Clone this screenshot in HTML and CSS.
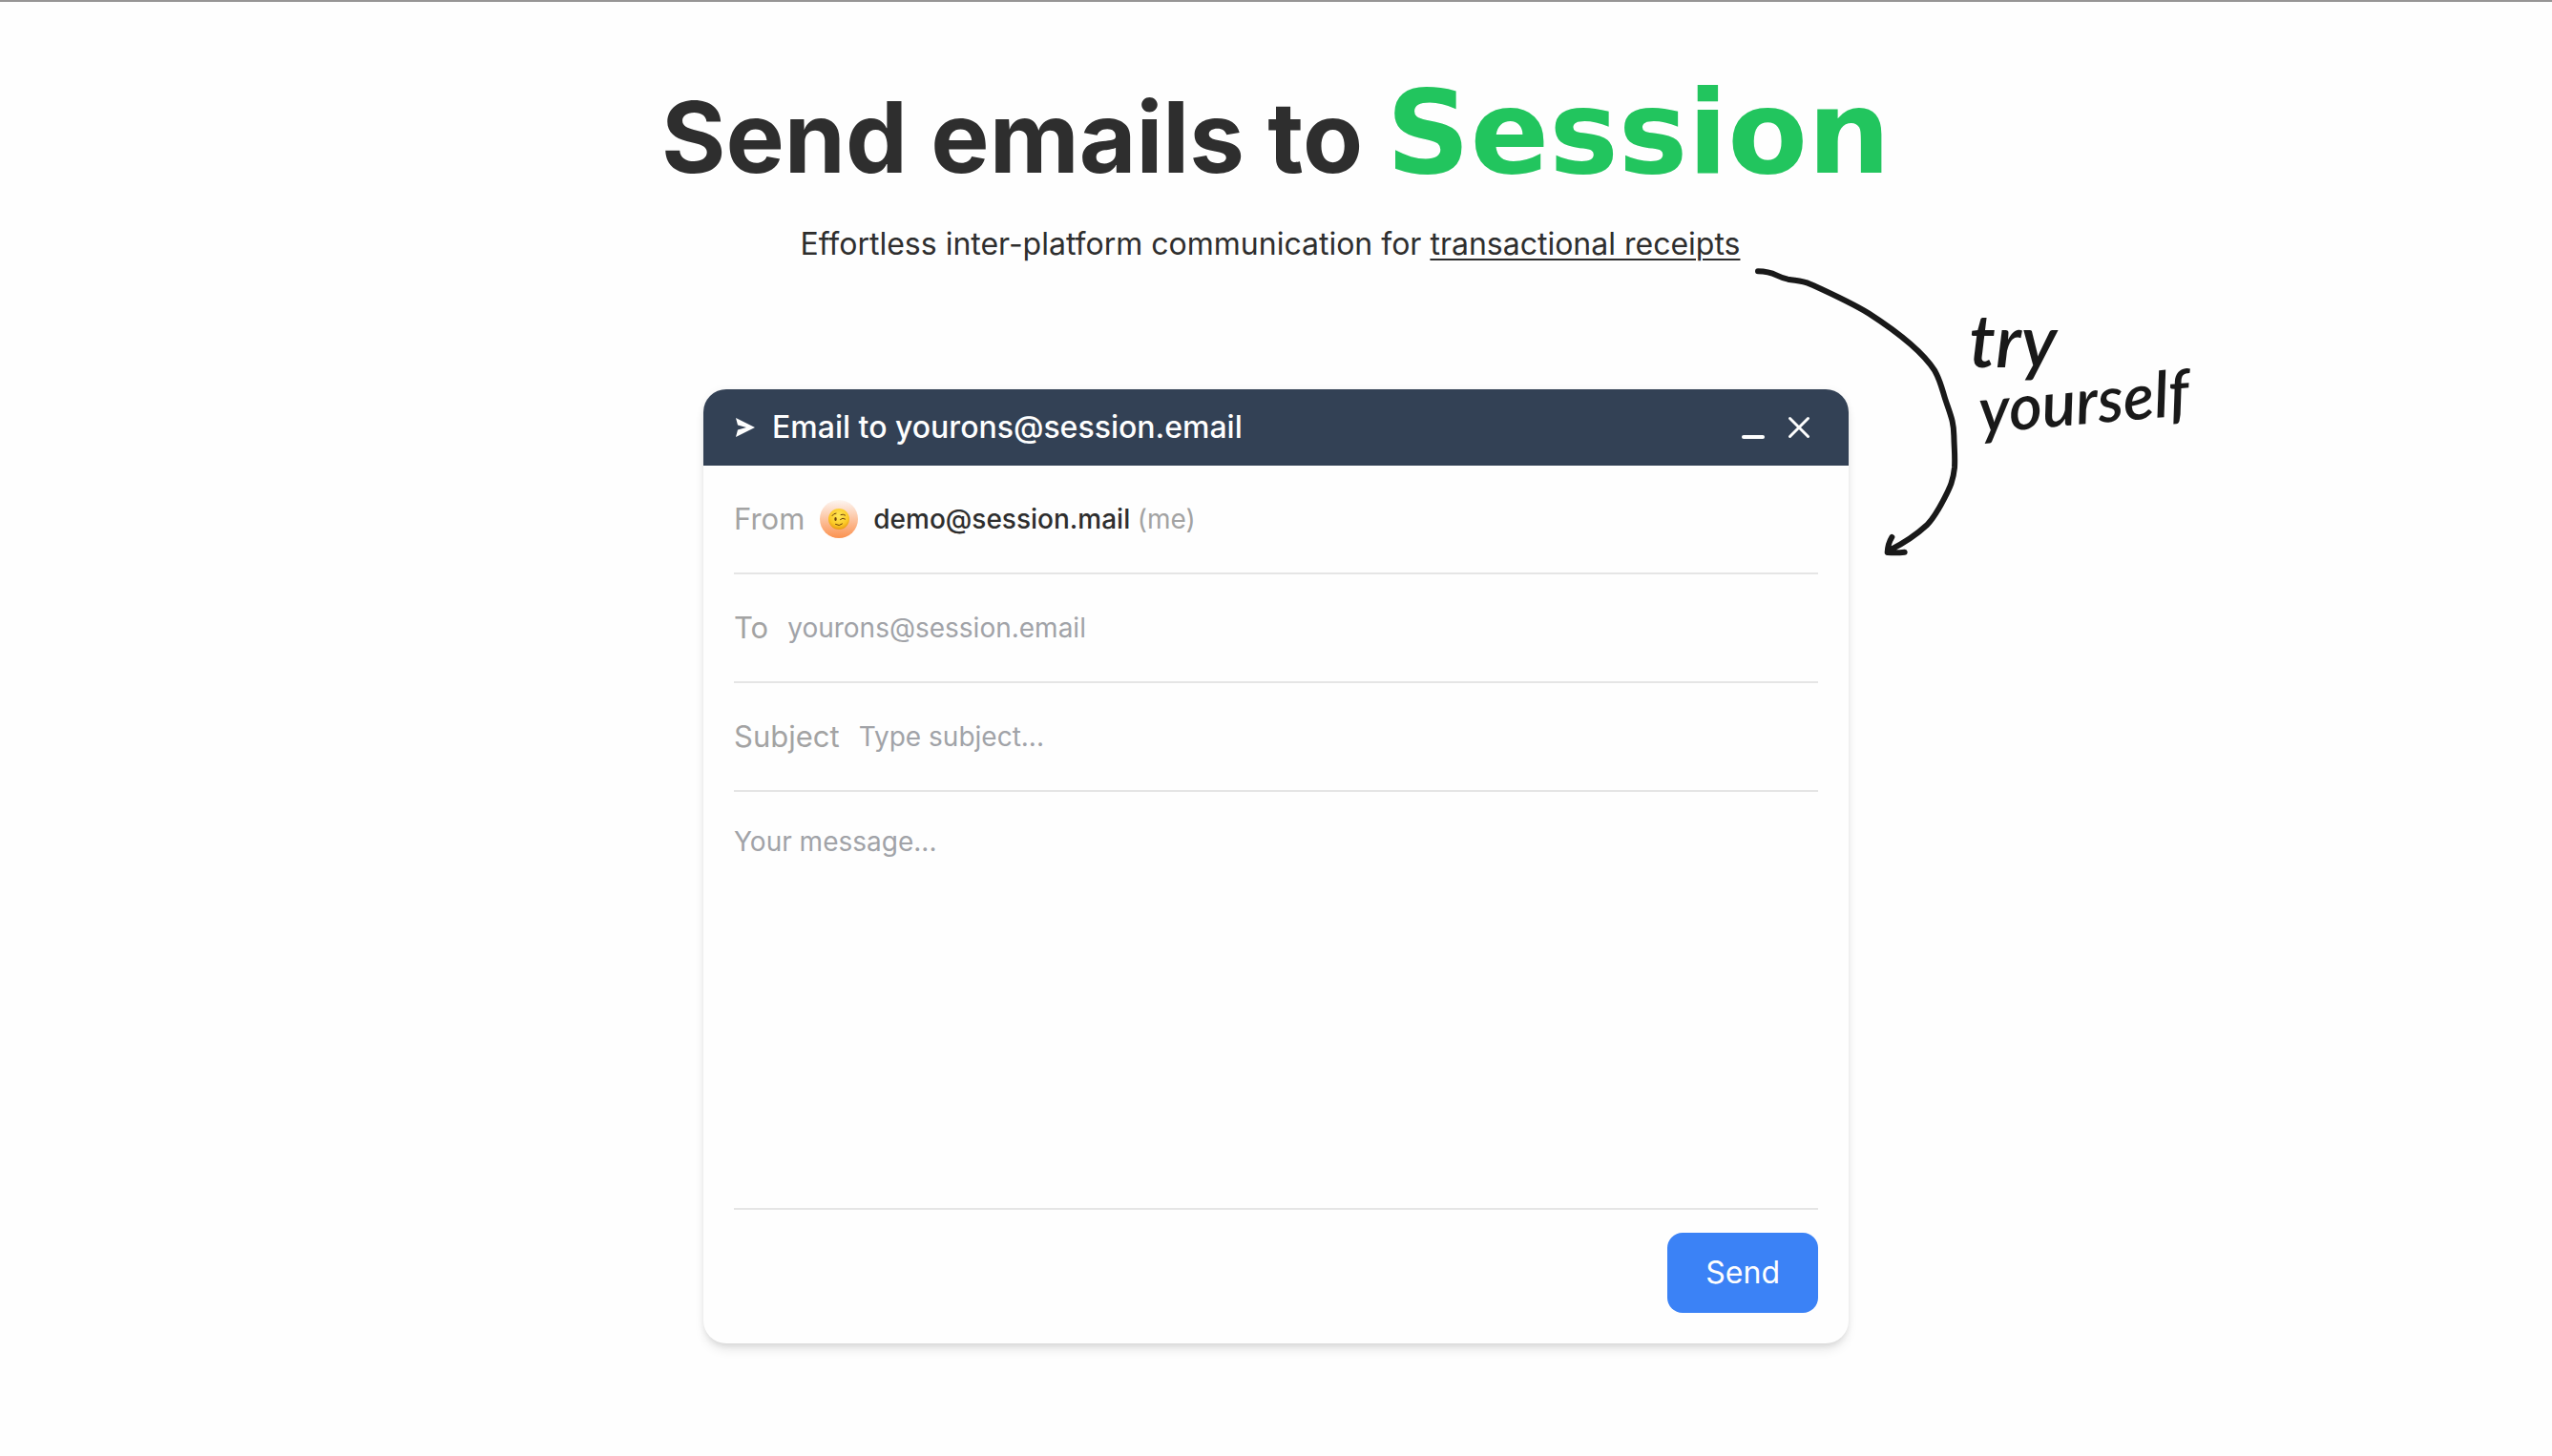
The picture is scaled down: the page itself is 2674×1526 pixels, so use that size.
FILE: index.html
```html
<!DOCTYPE html>
<html lang="en">
<head>
<meta charset="utf-8">
<meta name="viewport" content="width=device-width, initial-scale=1">
<title>Send emails to Session</title>
<link rel="stylesheet" href="styles.css">
</head>
<body>
<main class="page">
  <header class="hero">
    <h1 class="hero-title">Send emails to <span class="brand">Session</span></h1>
    <p class="hero-text">Effortless inter-platform communication for <a class="hero-link" href="#compose">transactional receipts</a></p>
  </header>

  <div class="composer">
    <form class="card" id="compose">
      <div class="card-head">
        <svg class="icon-send" viewBox="0 0 20 20" aria-hidden="true"><path d="M0 0 20 10 0 20 2 12.500 11 10 2 7.500z"/></svg>
        <h2 class="card-title">Email to yourons@session.email</h2>
        <button class="icon-button" type="button" aria-label="Minimize">
          <svg viewBox="0 0 32 32" aria-hidden="true"><path d="M6 26H26" stroke-width="4"/></svg>
        </button>
        <button class="icon-button" type="button" aria-label="Close">
          <svg viewBox="0 0 32 32" aria-hidden="true"><path d="M6.500 6.500 25.500 25.500M25.500 6.500 6.500 25.500" stroke-width="3"/></svg>
        </button>
      </div>
      <div class="card-body">
        <div class="row row-from">
          <span class="label">From</span>
          <span class="sender">
            <svg class="avatar" viewBox="0 0 40 40" aria-hidden="true">
              <defs>
                <linearGradient id="halo" x1="0" y1="0" x2="0" y2="1"><stop offset="0" stop-color="#fdf6f2"/><stop offset="1" stop-color="#fb9250"/></linearGradient>
                <radialGradient id="face" cx=".5" cy=".35" r=".65"><stop offset="0" stop-color="#ffe85a"/><stop offset=".7" stop-color="#fbc825"/><stop offset="1" stop-color="#e99a12"/></radialGradient>
              </defs>
              <circle cx="20" cy="20" r="20" fill="url(#halo)"/>
              <circle cx="20" cy="20" r="11" fill="url(#face)"/>
              <ellipse cx="16.500" cy="20" rx="1.200" ry="2" fill="#6b3e0c"/>
              <path d="M13 16.500q1.500-2.500 4-2.500M22 15.500q2.500-1 4.500.5M21.500 20.500q2.500-2.500 5-.5M16.500 25.500q4 2.500 7-.5" fill="none" stroke="#6b3e0c" stroke-width="1" stroke-linecap="round"/>
            </svg>
            <span class="address">demo@session.mail <span class="me">(me)</span></span>
          </span>
        </div>
        <div class="row">
          <label class="label" for="to">To</label>
          <input class="field" id="to" type="email" placeholder="yourons@session.email">
        </div>
        <div class="row">
          <label class="label" for="subject">Subject</label>
          <input class="field" id="subject" type="text" placeholder="Type subject...">
        </div>
        <textarea class="field message" aria-label="Message" placeholder="Your message..."></textarea>
        <div class="actions">
          <button class="send" type="submit">Send</button>
        </div>
      </div>
    </form>

    <svg class="note" viewBox="0 0 1500 1020" role="img" aria-label="Try yourself">
      <path d="M66 73C120 73 120 90 160 98C190 103 205 102 230 113C300 145 360 172 415 206C480 248 580 320 622 386C640 418 645 445 655 476C673 530 681 545 682 590C683 635 686 650 684 690C680 730 670 752 653 785C637 816 622 845 598 870C560 905 520 930 480 950M487 909C477 925 474 935 473 957C490 958 510 958 527 956"/>
      <text x="730" y="376" class="note-text note-lead">try</text>
      <text x="766" y="582" class="note-text" transform="rotate(-5 766 582)">yourself</text>
    </svg>
  </div>
</main>
</body>
</html>
```

FILE: styles.css
```css
* {
  box-sizing: border-box;
}

body {
  margin: 0;
  min-height: 100vh;
  border-top: 2px solid #979595;
  background: #fefefe;
  color: #2e2e2e;
  font-family: Inter, "Liberation Sans", sans-serif;
  font-size: 28px;
}

.page {
  padding: 80px 32px 96px;
  overflow-x: clip;
}

.hero {
  text-align: center;
}

.hero-title {
  margin: 0;
  font-size: 103px;
  line-height: 124px;
  font-weight: 700;
}

.brand {
  color: #22c55e;
  font-family: "DejaVu Sans", sans-serif;
  font-size: 122px;
  line-height: 0;
}

.hero-text {
  margin: 28px 0 0;
  padding-right: 12px;
  font-size: 32px;
  line-height: 44px;
}

.hero-link {
  color: inherit;
  text-decoration: underline;
  text-decoration-thickness: 2px;
  text-underline-offset: 4px;
}

.composer {
  position: relative;
  max-width: 1200px;
  margin: 130px auto 0;
}

.card {
  overflow: hidden;
  border-radius: 24px;
  background: #fefefe;
  box-shadow: 0 8px 12px -2px rgb(0 0 0 / 10%), 0 4px 8px -4px rgb(0 0 0 / 10%), 0 0 8px rgb(0 0 0 / 4%);
}

.card-head {
  display: flex;
  align-items: center;
  gap: 16px;
  height: 80px;
  padding: 0 36px 0 34px;
  background: #334155;
  color: #fefefe;
}

.icon-send {
  width: 20px;
  height: 20px;
  margin-right: 2px;
  fill: currentColor;
}

.card-title {
  flex: 1;
  margin: 0;
  font-size: 32px;
  line-height: 44px;
  font-weight: 500;
}

.icon-button {
  display: block;
  width: 32px;
  height: 32px;
  padding: 0;
  border: 0;
  background: none;
  color: inherit;
}

.icon-button svg {
  display: block;
  fill: none;
  stroke: currentColor;
  stroke-linecap: round;
}

.card-body {
  padding: 0 32px 32px;
}

.row {
  display: flex;
  align-items: center;
  gap: 20px;
  height: 114px;
  border-bottom: 2px solid #e5e5e5;
}

.row-from {
  gap: 16px;
}

.label {
  color: #a3a3a3;
  font-size: 31px;
  line-height: 44px;
}

.sender {
  display: flex;
  align-items: center;
  gap: 16px;
}

.avatar {
  width: 40px;
  height: 40px;
}

.address {
  font-weight: 500;
}

.me {
  color: #a3a3a3;
  font-weight: 400;
}

.field {
  flex: 1;
  min-width: 0;
  padding: 0;
  border: 0;
  outline: 0;
  background: none;
  color: inherit;
  font: inherit;
  line-height: 40px;
}

.field::placeholder {
  color: #a1a3a8;
  opacity: 1;
}

.message {
  display: block;
  width: 100%;
  height: 438px;
  padding: 32px 0;
  border-bottom: 2px solid #e5e5e5;
  resize: none;
}

.actions {
  display: flex;
  justify-content: flex-end;
  padding-top: 24px;
}

.send {
  padding: 20px 40px;
  border: 0;
  border-radius: 16px;
  background: #3b82f6;
  color: #fefefe;
  font: inherit;
  font-size: 32px;
  line-height: 44px;
}

.note {
  position: absolute;
  top: -148px;
  left: 1083px;
  width: 500px;
  height: 340px;
  pointer-events: none;
  fill: none;
  stroke: #191919;
  stroke-width: 18px;
  stroke-linecap: round;
  stroke-linejoin: round;
}

.note-text {
  fill: #191919;
  stroke: none;
  font-family: Lato, sans-serif;
  font-size: 200px;
  font-style: italic;
  font-weight: 600;
}

.note-lead {
  font-size: 230px;
}
```
